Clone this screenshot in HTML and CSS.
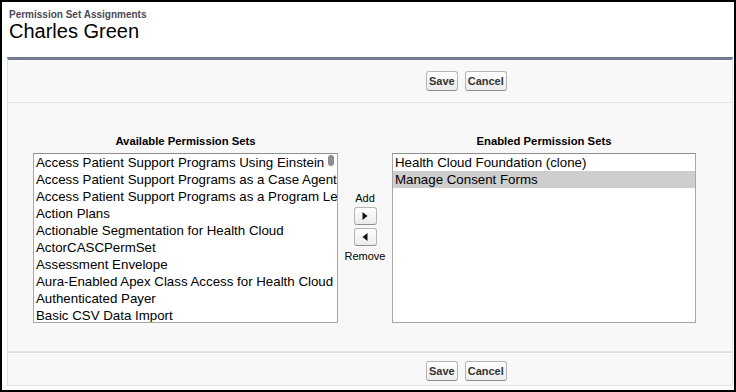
FILE: index.html
```html
<!DOCTYPE html>
<html>
<head>
<meta charset="utf-8">
<title>Permission Set Assignments</title>
<link rel="stylesheet" href="styles.css">
</head>
<body>
<div class="frame">
  <div class="page-head">
    <div class="subtitle">Permission Set Assignments</div>
    <h1 class="name">Charles Green</h1>
  </div>
  <div class="panel">
    <div class="btn-row top">
      <button class="btn">Save</button>
      <button class="btn">Cancel</button>
    </div>
    <div class="dual">
      <div class="col">
        <div class="col-title">Available Permission Sets</div>
        <div class="listbox left">
          <div class="opt">Access Patient Support Programs Using Einstein</div>
          <div class="opt">Access Patient Support Programs as a Case Agent</div>
          <div class="opt">Access Patient Support Programs as a Program Lead</div>
          <div class="opt">Action Plans</div>
          <div class="opt">Actionable Segmentation for Health Cloud</div>
          <div class="opt">ActorCASCPermSet</div>
          <div class="opt">Assessment Envelope</div>
          <div class="opt">Aura-Enabled Apex Class Access for Health Cloud</div>
          <div class="opt">Authenticated Payer</div>
          <div class="opt">Basic CSV Data Import</div>
          <div class="thumb"></div>
        </div>
      </div>
      <div class="mover">
        <div class="mover-label">Add</div>
        <button class="arrow-btn add" aria-label="Add">
          <svg width="6" height="8" viewBox="0 0 6 8"><polygon points="0.5,0 5.5,4 0.5,8" fill="#111"/></svg>
        </button>
        <button class="arrow-btn remove" aria-label="Remove">
          <svg width="6" height="8" viewBox="0 0 6 8"><polygon points="5.5,0 0.5,4 5.5,8" fill="#111"/></svg>
        </button>
        <div class="mover-label rm">Remove</div>
      </div>
      <div class="col right-col">
        <div class="col-title">Enabled Permission Sets</div>
        <div class="listbox right">
          <div class="opt">Health Cloud Foundation (clone)</div>
          <div class="opt selected">Manage Consent Forms</div>
        </div>
      </div>
    </div>
    <div class="btn-row bottom">
      <button class="btn">Save</button>
      <button class="btn">Cancel</button>
    </div>
  </div>
</div>
</body>
</html>
```

FILE: styles.css
```css
html, body {
  margin: 0;
  padding: 0;
  background: #ffffff;
}
body {
  font-family: "Liberation Sans", Arial, sans-serif;
  color: #000;
}
.frame {
  box-sizing: border-box;
  width: 736px;
  height: 392px;
  border: 2px solid #000;
  padding: 7px 1px 0 5px;
  background: #fff;
  overflow: hidden;
}
.page-head {
  padding-left: 2px;
}
.subtitle {
  font-size: 10px;
  line-height: 11px;
  font-weight: bold;
  color: #4a4a56;
}
.name {
  margin: 0;
  font-size: 20px;
  line-height: 22px;
  font-weight: normal;
  color: #000;
}
.panel {
  margin-top: 15px;
  background: #f8f8f8;
  border: 1px solid #e0e3e5;
  border-top: 3px solid #747a90;
}
.btn-row {
  display: flex;
  gap: 7px;
  padding-left: 418px;
}
.btn-row.top {
  padding-top: 11px;
  padding-bottom: 11px;
  border-bottom: 1px solid #e1e3e5;
}
.btn-row.bottom {
  padding-top: 8px;
  padding-bottom: 4px;
  border-top: 1px solid #dcdee0;
  box-shadow: inset 0 1px 0 #fff;
}
.btn {
  box-sizing: border-box;
  height: 20px;
  padding: 0 2px;
  font-family: "Liberation Sans", Arial, sans-serif;
  font-size: 11px;
  font-weight: bold;
  color: #333;
  background: linear-gradient(#ffffff, #ececec);
  border: 1px solid #b5b5b5;
  border-bottom-color: #8f8f8f;
  border-radius: 3px;
  cursor: pointer;
}
.dual {
  display: flex;
  padding: 31px 0 28px 25px;
  border-bottom: 1px solid #e1e3e5;
}
.col {
  display: flex;
  flex-direction: column;
  width: 305px;
}
.right-col {
  width: 304px;
}
.col-title {
  font-size: 11.3px;
  line-height: 14px;
  font-weight: bold;
  text-align: center;
  color: #000;
}
.listbox {
  position: relative;
  box-sizing: border-box;
  height: 170px;
  margin-top: 5px;
  background: #fff;
  border: 1px solid #a6a6a6;
  border-top-color: #8e8e8e;
  overflow: hidden;
}
.opt {
  font-size: 13.3px;
  line-height: 17px;
  height: 17px;
  padding-left: 2px;
  white-space: nowrap;
  color: #000;
}
.opt.selected {
  background: #cecece;
}
.thumb {
  position: absolute;
  top: 1px;
  right: 3px;
  width: 6px;
  height: 11px;
  border-radius: 3px;
  background: #8d8d8d;
}
.mover {
  width: 54px;
  display: flex;
  flex-direction: column;
  align-items: center;
  margin-top: 58px;
}
.mover-label {
  font-size: 11px;
  line-height: 13px;
  color: #000;
}
.mover-label.rm {
  margin-top: 4px;
}
.arrow-btn {
  box-sizing: border-box;
  width: 23px;
  height: 18px;
  padding: 0;
  margin-top: 2px;
  display: flex;
  align-items: center;
  justify-content: center;
  background: linear-gradient(#ffffff, #ececec);
  border: 1px solid #b5b5b5;
  border-bottom-color: #8f8f8f;
  border-radius: 3px;
}
.arrow-btn.remove {
  margin-top: 3px;
}
```
